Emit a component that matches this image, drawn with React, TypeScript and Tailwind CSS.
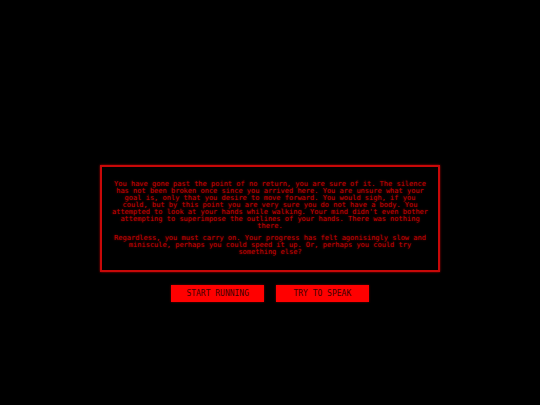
import React from 'react';

interface Choice {
    id: string;
    label: string;
}

const paragraphs = [
    "You have gone past the point of no return, you are sure of it. The silence has not been broken once since you arrived here. You are unsure what your goal is, only that you desire to move forward. You would sigh, if you could, but by this point you are very sure you do not have a body. You attempted to look at your hands while walking. Your mind didn't even bother attempting to superimpose the outlines of your hands. There was nothing there.",
    'Regardless, you must carry on. Your progress has felt agonisingly slow and miniscule, perhaps you could speed it up. Or, perhaps you could try something else?',
];

const choices: Choice[] = [
    { id: 'run', label: 'START RUNNING' },
    { id: 'speak', label: 'TRY TO SPEAK' },
];

const StoryBox = () => (
    <section className="flex w-full flex-col gap-[5px] border-2 border-[#c80808] px-2 py-3.5 text-center text-[7px] leading-[7px] text-[#c40000] shadow-[0_0_2px_#b00000] [text-shadow:0_0_2px_#800000]">
        {paragraphs.map((text) => (
            <p key={text}>{text}</p>
        ))}
    </section>
);

export default function App() {
    return (
        <main className="flex min-h-screen flex-col items-center bg-black px-4 pt-[165px] font-['DejaVu_Sans_Mono',monospace]">
            <div className="flex w-full max-w-[340px] flex-col items-center gap-[13px]">
                <StoryBox />
                <div className="grid grid-cols-2 gap-3">
                    {choices.map((choice) => (
                        <button
                            key={choice.id}
                            type="button"
                            className="bg-[#ff0000] px-[15px] text-[8px] leading-[17px] text-[#400000] shadow-[0_0_2px_#700000] hover:bg-red-700"
                        >
                            {choice.label}
                        </button>
                    ))}
                </div>
            </div>
        </main>
    );
}
